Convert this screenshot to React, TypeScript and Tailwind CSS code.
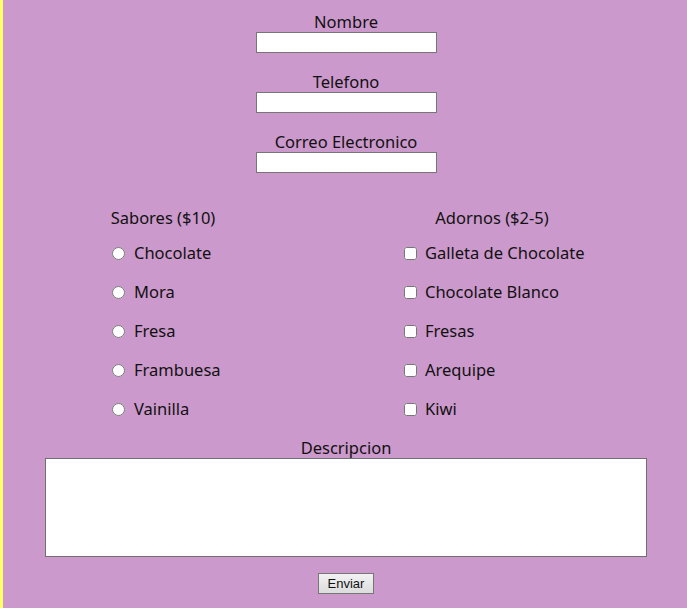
const sabores = ["Chocolate", "Mora", "Fresa", "Frambuesa", "Vainilla"];
const adornos = ["Galleta de Chocolate", "Chocolate Blanco", "Fresas", "Arequipe", "Kiwi"];

const fields = ["Nombre", "Telefono", "Correo Electronico"];

export default function App() {
  return (
    <div className="min-h-[608px] bg-[#cc99cc] border-l-[3px] border-[#ffff66] text-[#111] font-['Noto_Sans',sans-serif] text-[16.5px] leading-[20px]">
      <form className="w-[602px] ml-[42px] pt-[12px] flex flex-col items-center">
        {fields.map((f) => (
          <div key={f} className="flex flex-col items-center mb-[19px]">
            <label>{f}</label>
            <input type="text" className="w-[181px] h-[21px] bg-white border border-[#767676]" />
          </div>
        ))}

        <div className="w-full flex mt-[16px]">
          <div className="w-[200px] ml-[18px]">
            <p className="text-center">Sabores ($10)</p>
            <div className="pl-[49px] mt-[15px] flex flex-col gap-[19px]">
              {sabores.map((s) => (
                <label key={s} className="flex items-center gap-[9px] h-[20px]">
                  <input type="radio" name="sabor" className="w-[13px] h-[13px] m-0" />
                  {s}
                </label>
              ))}
            </div>
          </div>
          <div className="w-[200px] ml-[129px]">
            <p className="text-center">Adornos ($2-5)</p>
            <div className="pl-[12px] mt-[15px] flex flex-col gap-[19px]">
              {adornos.map((a) => (
                <label key={a} className="flex items-center gap-[8px] h-[20px]">
                  <input type="checkbox" className="w-[13px] h-[13px] m-0" />
                  {a}
                </label>
              ))}
            </div>
          </div>
        </div>

        <label className="mt-[19px]">Descripcion</label>
        <textarea className="w-[602px] h-[99px] bg-white border border-[#707070] block resize-none" />

        <button
          type="button"
          className="mt-[16px] w-[56px] h-[21px] border border-[#767676] bg-gradient-to-b from-[#f2f2f2] to-[#dcdcdc] text-[13px] leading-none font-['Liberation_Sans',sans-serif]"
        >
          Enviar
        </button>
      </form>
    </div>
  );
}
